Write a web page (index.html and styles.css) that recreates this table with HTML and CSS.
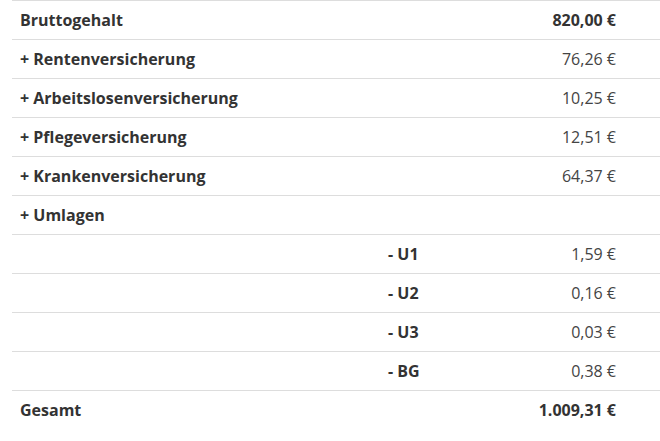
FILE: index.html
```html
<!DOCTYPE html>
<html lang="de">
<head>
<meta charset="utf-8">
<link rel="stylesheet" href="styles.css">
</head>
<body>
<table class="calc">
  <colgroup><col class="c-label"><col class="c-sub"><col class="c-val"></colgroup>
  <tr class="strong"><td colspan="2">Bruttogehalt</td><td class="val">820,00 €</td></tr>
  <tr><td colspan="2" class="lbl">+ Rentenversicherung</td><td class="val">76,26 €</td></tr>
  <tr><td colspan="2" class="lbl">+ Arbeitslosenversicherung</td><td class="val">10,25 €</td></tr>
  <tr><td colspan="2" class="lbl">+ Pflegeversicherung</td><td class="val">12,51 €</td></tr>
  <tr><td colspan="2" class="lbl">+ Krankenversicherung</td><td class="val">64,37 €</td></tr>
  <tr><td colspan="2" class="lbl">+ Umlagen</td><td class="val"></td></tr>
  <tr><td></td><td class="lbl">- U1</td><td class="val">1,59 €</td></tr>
  <tr><td></td><td class="lbl">- U2</td><td class="val">0,16 €</td></tr>
  <tr><td></td><td class="lbl">- U3</td><td class="val">0,03 €</td></tr>
  <tr><td></td><td class="lbl">- BG</td><td class="val">0,38 €</td></tr>
  <tr class="strong"><td colspan="2">Gesamt</td><td class="val">1.009,31 €</td></tr>
</table>
</body>
</html>
```
FILE: styles.css
```css
html, body {
  margin: 0;
  padding: 0;
  background: #fff;
}
body {
  padding-left: 12px;
  font-family: "Open Sans", "Liberation Sans", sans-serif;
  font-size: 16px;
  color: #333;
}
.calc {
  width: 648px;
  border-collapse: collapse;
  table-layout: fixed;
}
.c-label { width: 368px; }
.c-sub { width: 120px; }
.c-val { width: 160px; }
.calc td {
  border-top: 1px solid #ddd;
  padding: 8px 8px;
  height: 22px;
  line-height: 22px;
  vertical-align: middle;
}
.lbl {
  font-weight: 700;
  color: #333;
}
.strong td {
  font-weight: 700;
  color: #333;
}
.val {
  text-align: right;
  padding-right: 44px !important;
  color: #444;
}
.strong .val {
  color: #333;
}
```
